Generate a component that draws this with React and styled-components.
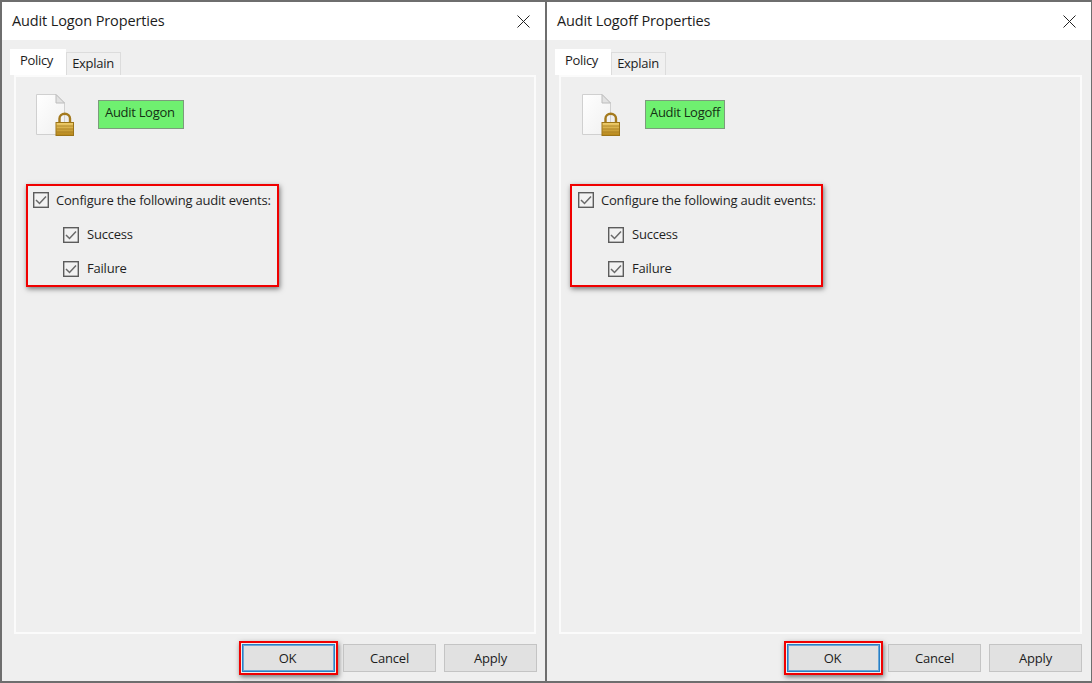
import React from 'react';
import styled, { createGlobalStyle } from 'styled-components';

const GlobalStyle = createGlobalStyle`
  html, body { margin: 0; padding: 0; background: #ffffff; }
  body { font-family: "Open Sans", "Liberation Sans", sans-serif; color: #1c1c1c; }
  * { box-sizing: border-box; }
`;

const Page = styled.div`
  display: flex;
  width: 1092px;
  height: 683px;
  overflow: hidden;
`;

const Dialog = styled.div`
  width: 546px;
  height: 683px;
  border: 1px solid #6e6e6e;
  border-left-width: ${({ $first }) => ($first ? 2 : 1)}px;
  border-top-width: 2px;
  border-bottom-width: 2px;
  border-right-width: 1px;
  background: #efefef;
  display: flex;
  flex-direction: column;
`;

const TitleBar = styled.div`
  height: 38px;
  flex: none;
  background: #ffffff;
  display: flex;
  align-items: center;
  justify-content: space-between;
  padding: 0 15px 2px 10px;
  font-size: 14.5px;
  letter-spacing: -0.12px;
  color: #1c1c1c;
`;

const CloseIcon = styled.svg`
  width: 13px;
  height: 13px;
  display: block;
  margin-top: 2px;
`;

const Body = styled.div`
  flex: 1;
  display: flex;
  flex-direction: column;
  padding: 9px ${({ $first }) => ($first ? 8 : 9)}px 0 8px;
`;

const Tabs = styled.div`
  display: flex;
  align-items: flex-end;
  height: 26px;
  flex: none;
`;

const Tab = styled.div`
  height: ${({ $active }) => ($active ? 26 : 23)}px;
  width: ${({ $active }) => ($active ? 56 : 55)}px;
  background: ${({ $active }) => ($active ? '#ffffff' : '#f0f0f0')};
  border: 1px solid ${({ $active }) => ($active ? '#ffffff' : '#dcdcdc')};
  border-bottom: none;
  font-size: 13px;
  letter-spacing: -0.3px;
  display: flex;
  align-items: center;
  justify-content: center;
  padding-bottom: ${({ $active }) => ($active ? 5 : 3)}px;
  padding-right: ${({ $active }) => ($active ? 3 : 1)}px;
`;

const Panel = styled.div`
  width: ${({ $first }) => ($first ? 522 : 523)}px;
  margin-left: 4px;
  height: 559px;
  flex: none;
  background: #efefef;
  border: 2px solid #fbfbfb;
  padding: 15px 0 0 ${({ $inset }) => $inset}px;
`;

const Header = styled.div`
  display: flex;
  align-items: center;
  gap: ${({ $gap }) => $gap}px;
  padding-left: ${({ $pad }) => $pad}px;
  height: 44px;
`;

const FileIcon = styled.svg`
  width: 38px;
  height: 44px;
  display: block;
  flex: none;
`;

const NameTag = styled.div`
  height: 29px;
  width: ${({ $width }) => $width}px;
  background: #6ff070;
  border: 1px solid #7c9c7c;
  font-size: 13px;
  letter-spacing: -0.3px;
  white-space: nowrap;
  display: flex;
  align-items: center;
  padding-left: ${({ $textInset }) => $textInset}px;
  padding-bottom: 4px;
  color: #143014;
`;

const EventsBox = styled.div`
  margin-top: 48px;
  width: 253px;
  height: 103px;
  border: 2px solid #f00000;
  box-shadow: 1px 2px 5px rgba(0, 0, 0, 0.5);
  padding: 5px 0 0 ${({ $pad }) => $pad}px;
  display: flex;
  flex-direction: column;
`;

const CheckRow = styled.div`
  display: flex;
  align-items: center;
  height: 18px;
  gap: 7px;
  margin-left: ${({ $nested }) => ($nested ? 30 : 0)}px;
  margin-top: ${({ $gapTop }) => $gapTop || 0}px;
  font-size: 13px;
  letter-spacing: -0.2px;
  white-space: nowrap;
  color: #1f1f1f;
`;

const RowLabel = styled.span`
  margin-bottom: ${({ $raised }) => ($raised ? 2 : 0)}px;
  margin-left: ${({ $raised }) => ($raised ? 1 : 0)}px;
`;

const Check = styled.svg`
  width: 16px;
  height: 16px;
  display: block;
  flex: none;
`;

const Footer = styled.div`
  display: flex;
  justify-content: flex-end;
  gap: 8px;
  margin-top: 10px;
`;

const Button = styled.button`
  position: relative;
  width: 93px;
  height: 28px;
  padding: 0 ${({ $primary }) => ($primary ? 2 : 0)}px 0 0;
  background: #e1e1e1;
  border: 1px solid ${({ $primary }) => ($primary ? '#2a7fc4' : '#c4c4c4')};
  outline: ${({ $primary }) => ($primary ? '1px solid #6aa6d6' : 'none')};
  outline-offset: -2px;
  font-family: inherit;
  font-size: 13px;
  letter-spacing: -0.2px;
  color: #1c1c1c;

  ${({ $flagged }) =>
    $flagged &&
    `&::after {
      content: "";
      position: absolute;
      inset: -4px;
      border: 2px solid #f00000;
      box-shadow: 1px 2px 5px rgba(0, 0, 0, 0.5);
    }`}
`;

const CheckBox = () => (
  <Check viewBox="0 0 16 16">
    <rect x="0.7" y="0.7" width="14.6" height="14.6" fill="#f2f2f2" stroke="#5c5c5c" strokeWidth="1.4" />
    <path d="M3 8 L6.5 11.5 L13 4.5" fill="none" stroke="#6a6a6a" strokeWidth="1.5" />
  </Check>
);

const LockedFile = () => (
  <FileIcon viewBox="0 0 38 44">
    <defs>
      <linearGradient id="lockBody" x1="0" y1="0" x2="0" y2="1">
        <stop offset="0" stopColor="#f0cf6e" />
        <stop offset="1" stopColor="#b58518" />
      </linearGradient>
      <linearGradient id="sheet" x1="0" y1="0" x2="1" y2="1">
        <stop offset="0" stopColor="#ffffff" />
        <stop offset="1" stopColor="#f0f0f0" />
      </linearGradient>
    </defs>
    <path d="M0.5 2.5 H20 L28.5 11 V42.5 H0.5 Z" fill="url(#sheet)" stroke="#d0d0d0" />
    <path d="M20 2.5 V11 H28.5 Z" fill="#e2e2e2" stroke="#bcbcbc" />
    <path d="M23.5 30.5 V26.5 a5 4.5 0 0 1 10.5 0 V30.5" fill="none" stroke="#a47a1e" strokeWidth="2.4" />
    <rect x="20" y="30.5" width="17.5" height="13" fill="url(#lockBody)" stroke="#9c7418" />
    <path d="M20.5 34 H37 M20.5 37 H37 M20.5 40 H37" stroke="#a67c22" strokeWidth="0.8" />
  </FileIcon>
);

const PropertiesDialog = ({ title, name, tagWidth, textInset, gap, inset, iconPad, boxPad, first }) => (
  <Dialog $first={first}>
    <TitleBar>
      <span>{title}</span>
      <CloseIcon viewBox="0 0 13 13">
        <path d="M0.5 0.5 L12.5 12.5 M12.5 0.5 L0.5 12.5" stroke="#222" fill="none" />
      </CloseIcon>
    </TitleBar>
    <Body $first={first}>
      <Tabs>
        <Tab $active>Policy</Tab>
        <Tab>Explain</Tab>
      </Tabs>
      <Panel $first={first} $inset={inset}>
        <Header $gap={gap} $pad={iconPad}>
          <LockedFile />
          <NameTag $width={tagWidth} $textInset={textInset}>{name}</NameTag>
        </Header>
        <EventsBox $pad={boxPad}>
          <CheckRow>
            <CheckBox />
            <RowLabel>Configure the following audit events:</RowLabel>
          </CheckRow>
          <CheckRow $nested $gapTop={17}>
            <CheckBox />
            <RowLabel $raised>Success</RowLabel>
          </CheckRow>
          <CheckRow $nested $gapTop={16}>
            <CheckBox />
            <RowLabel $raised>Failure</RowLabel>
          </CheckRow>
        </EventsBox>
      </Panel>
      <Footer>
        <Button $primary $flagged>OK</Button>
        <Button>Cancel</Button>
        <Button>Apply</Button>
      </Footer>
    </Body>
  </Dialog>
);

export default function App() {
  return (
    <>
      <GlobalStyle />
      <Page>
        <PropertiesDialog
          first
          title="Audit Logon Properties"
          name="Audit Logon"
          tagWidth={86}
          textInset={6}
          gap={24}
          inset={10}
          iconPad={10}
          boxPad={5}
        />
        <PropertiesDialog
          title="Audit Logoff Properties"
          name="Audit Logoff"
          tagWidth={80}
          textInset={4}
          gap={25}
          inset={9}
          iconPad={12}
          boxPad={6}
        />
      </Page>
    </>
  );
}
